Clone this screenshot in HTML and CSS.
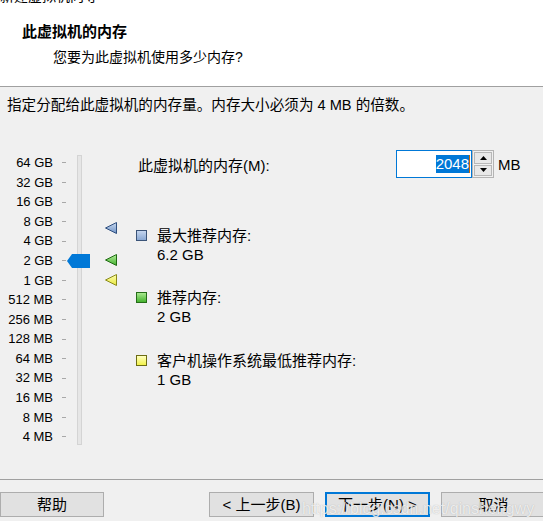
FILE: index.html
```html
<!DOCTYPE html>
<html lang="zh-CN">
<head>
<meta charset="utf-8">
<title>此虚拟机的内存</title>
<link rel="stylesheet" href="styles.css">
</head>
<body>
<div class="page">
  <header class="header">
    <div class="cut"><span class="cut-left">新建虚拟机向导</span><span class="cut-right">×</span></div>
    <div class="title">此虚拟机的内存</div>
    <div class="subtitle">您要为此虚拟机使用多少内存?</div>
  </header>
  <main class="main">
    <div class="desc">指定分配给此虚拟机的内存量。内存大小必须为 4 MB 的倍数。</div>
    <div class="content">
      <div class="slider">
        <div class="labels">
          <div class="lab">64 GB</div><div class="lab">32 GB</div><div class="lab">16 GB</div>
          <div class="lab">8 GB</div><div class="lab">4 GB</div><div class="lab">2 GB</div>
          <div class="lab">1 GB</div><div class="lab">512 MB</div><div class="lab">256 MB</div>
          <div class="lab">128 MB</div><div class="lab">64 MB</div><div class="lab">32 MB</div>
          <div class="lab">16 MB</div><div class="lab">8 MB</div><div class="lab">4 MB</div>
        </div>
        <div class="ticks">
          <div class="tk"></div><div class="tk"></div><div class="tk"></div><div class="tk"></div><div class="tk"></div>
          <div class="tk"></div><div class="tk"></div><div class="tk"></div><div class="tk"></div><div class="tk"></div>
          <div class="tk"></div><div class="tk"></div><div class="tk"></div><div class="tk"></div><div class="tk"></div>
        </div>
        <div class="track"></div>
        <svg class="thumb" width="23" height="14" viewBox="0 0 23 14"><polygon points="0,7 5,0 23,0 23,14 5,14" fill="#0078d7"/></svg>
        <svg class="mark mark-max" width="12" height="12" viewBox="0 0 12 12">
          <defs><linearGradient id="gb" x1="0" y1="0" x2="0" y2="1"><stop offset="0" stop-color="#c9d9ef"/><stop offset="1" stop-color="#6f93c6"/></linearGradient></defs>
          <polygon points="0.5,6 11.5,0.5 11.5,11.5" fill="url(#gb)" stroke="#2f4f7f" stroke-width="1"/>
        </svg>
        <svg class="mark mark-rec" width="12" height="12" viewBox="0 0 12 12">
          <defs><linearGradient id="gg" x1="0" y1="0" x2="0" y2="1"><stop offset="0" stop-color="#b6ef9e"/><stop offset="1" stop-color="#3fae2a"/></linearGradient></defs>
          <polygon points="0.5,6 11.5,0.5 11.5,11.5" fill="url(#gg)" stroke="#1f6a12" stroke-width="1"/>
        </svg>
        <svg class="mark mark-min" width="12" height="12" viewBox="0 0 12 12">
          <defs><linearGradient id="gy" x1="0" y1="0" x2="0" y2="1"><stop offset="0" stop-color="#ffffb0"/><stop offset="1" stop-color="#e6e63a"/></linearGradient></defs>
          <polygon points="0.5,6 11.5,0.5 11.5,11.5" fill="url(#gy)" stroke="#8a8a1a" stroke-width="1"/>
        </svg>
      </div>
      <div class="right">
        <div class="memrow">
          <div class="memlabel">此虚拟机的内存(M):</div>
          <div class="numbox"><span class="sel">2048</span><span class="caret"></span></div>
          <div class="spin">
            <div class="spinbtn"><svg width="7" height="4" viewBox="0 0 7 4"><polygon points="3.5,0 7,4 0,4" fill="#000"/></svg></div>
            <div class="spinbtn"><svg width="7" height="4" viewBox="0 0 7 4"><polygon points="0,0 7,0 3.5,4" fill="#000"/></svg></div>
          </div>
          <div class="unit">MB</div>
        </div>
        <div class="legend">
          <div class="item">
            <span class="sw sw-blue"></span>
            <div class="itext"><div>最大推荐内存:</div><div>6.2 GB</div></div>
          </div>
          <div class="item">
            <span class="sw sw-green"></span>
            <div class="itext"><div>推荐内存:</div><div>2 GB</div></div>
          </div>
          <div class="item">
            <span class="sw sw-yellow"></span>
            <div class="itext"><div>客户机操作系统最低推荐内存:</div><div>1 GB</div></div>
          </div>
        </div>
      </div>
    </div>
  </main>
  <footer class="footer">
    <button class="btn btn-help">帮助</button>
    <div class="navbtns">
      <button class="btn">&lt; 上一步(B)</button>
      <button class="btn btn-default">下一步(N) &gt;</button>
      <button class="btn">取消</button>
    </div>
    <div class="watermark">https://blog.csdn.net/qinshengwy</div>
  </footer>
</div>
</body>
</html>
```
FILE: styles.css
```css
* { box-sizing: border-box; }
html, body { margin: 0; padding: 0; }
body {
  width: 543px;
  height: 521px;
  overflow: hidden;
  background: #f0f0f0;
  font-family: "Liberation Sans", "Noto Sans CJK SC", sans-serif;
  font-size: 15px;
  color: #000;
}
.page {
  width: 543px;
  height: 521px;
  display: flex;
  flex-direction: column;
  position: relative;
}
.header {
  height: 87px;
  background: #fff;
  border-bottom: 1px solid #a0a0a0;
  flex: none;
}
.cut {
  height: 4px;
  overflow: hidden;
  display: flex;
  justify-content: space-between;
  font-size: 14px;
  line-height: 16px;
}
.cut-left, .cut-right { display: block; margin-top: -12px; }
.cut-right { margin-right: 4px; }
.title {
  margin-top: 18px;
  padding-left: 22px;
  font-weight: bold;
  font-size: 15px;
  line-height: 20px;
}
.subtitle {
  margin-top: 5px;
  padding-left: 53px;
  font-size: 14px;
  line-height: 20px;
}
.main { flex: 1; }
.desc {
  padding: 8px 0 0 7px;
  font-size: 14.6px;
  line-height: 20px;
}
.content { display: flex; }
.slider {
  position: relative;
  width: 125px;
  flex: none;
  display: flex;
  padding-top: 38.2px;
}
.labels { width: 53px; }
.lab {
  height: 19.57px;
  line-height: 19.57px;
  text-align: right;
  font-size: 13px;
  white-space: nowrap;
}
.ticks { width: 4px; margin-left: 9px; }
.tk {
  height: 19.57px;
  display: flex;
  align-items: center;
}
.tk::before {
  content: "";
  display: block;
  width: 4px;
  height: 1px;
  background: #a8a8a8;
}
.track {
  width: 5px;
  margin-left: 11px;
  margin-top: 2px;
  height: 290px;
  background: #e6e6e6;
  border: 1px solid #d4d4d4;
}
.thumb { position: absolute; left: 67px; top: 139px; }
.mark { position: absolute; left: 105px; }
.mark-max { top: 107px; }
.mark-rec { top: 139px; }
.mark-min { top: 159px; }
.right { margin-left: 11px; flex: 1; }
.memrow {
  margin-top: 35px;
  height: 28px;
  display: flex;
  align-items: center;
}
.memlabel { width: 260px; padding-left: 2px; }
.numbox {
  width: 76px;
  height: 28px;
  background: #fff;
  border: 1px solid #0078d7;
  display: flex;
  align-items: center;
  justify-content: flex-end;
  padding-right: 1px;
}
.sel {
  background: #0078d7;
  color: #fff;
  height: 18px;
  line-height: 18px;
}
.caret { width: 1px; height: 18px; background: #c86400; }
.spin {
  width: 22px;
  height: 28px;
  border: 1px solid #b4b4b4;
  display: flex;
  flex-direction: column;
  padding: 1px;
  gap: 1px;
}
.spinbtn {
  flex: 1;
  background: #e8e8e8;
  border: 1px solid #b8b8b8;
  display: flex;
  align-items: center;
  justify-content: center;
}
.spinbtn svg { display: block; }
.unit { margin-left: 4px; }
.legend {
  margin-top: 47.5px;
  display: flex;
  flex-direction: column;
  gap: 24.5px;
}
.item { display: flex; align-items: flex-start; }
.sw {
  width: 11px;
  height: 11px;
  margin-top: 4px;
  margin-right: 10px;
  border: 1px solid;
  flex: none;
}
.sw-blue { border-color: #3b5478; background: linear-gradient(#c4d5ee, #8aa8d3); }
.sw-green { border-color: #256c18; background: linear-gradient(#a8e88f, #45b22e); }
.sw-yellow { border-color: #6c6c14; background: linear-gradient(#ffffc0, #f2f24a); }
.itext { line-height: 19px; }
.footer {
  flex: none;
  height: 42px;
  border-top: 1px solid #a0a0a0;
  padding-top: 12px;
  display: flex;
  align-items: flex-start;
  position: relative;
}
.btn {
  height: 25px;
  width: 105px;
  background: #e1e1e1;
  border: 1px solid #adadad;
  font-family: "Liberation Sans", "Noto Sans CJK SC", sans-serif;
  font-size: 15px;
  color: #000;
  padding: 0;
  line-height: 21px;
  flex: none;
}
.btn-help { width: 104px; }
.navbtns {
  display: flex;
  gap: 11px;
  margin-left: 105px;
}
.btn-default { border: 2px solid #0078d7; }
.watermark {
  position: absolute;
  left: 302px;
  top: 19px;
  font-size: 16px;
  line-height: 20px;
  color: rgba(255,255,255,0.75);
  text-shadow: 0 0 1px rgba(120,120,120,0.5);
  white-space: nowrap;
  pointer-events: none;
}
```
